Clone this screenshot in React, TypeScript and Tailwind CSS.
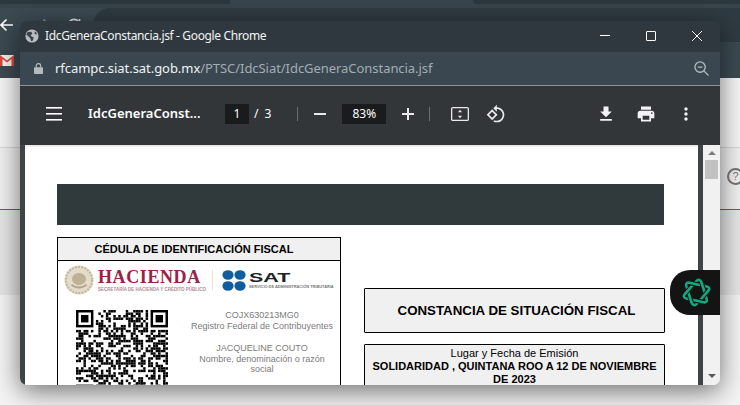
import React from "react";

const sans = "font-['Noto_Sans',sans-serif]";

function Qr() {
  const n = 37;
  const cells: React.ReactElement[] = [];
  const inFinder = (x: number, y: number) =>
    (x < 8 && y < 8) || (x > n - 9 && y < 8) || (x < 8 && y > n - 9);
  let s = 12345;
  for (let y = 0; y < n; y++) {
    for (let x = 0; x < n; x++) {
      s = (s * 1103515245 + 12345) & 0x7fffffff;
      if (inFinder(x, y)) continue;
      if (((s >> 16) & 7) < 4) cells.push(<rect key={`${x}-${y}`} x={x} y={y} width={1} height={1} />);
    }
  }
  const finder = (x: number, y: number) => (
    <g key={`f${x}-${y}`}>
      <rect x={x} y={y} width={7} height={7} />
      <rect x={x + 1} y={y + 1} width={5} height={5} fill="#fff" />
      <rect x={x + 2} y={y + 2} width={3} height={3} />
    </g>
  );
  return (
    <svg viewBox="0 0 37 37" className="w-[92px] h-[92px] shrink-0" fill="#000">
      {cells}
      {finder(0, 0)}
      {finder(30, 0)}
      {finder(0, 30)}
    </svg>
  );
}

function Seal() {
  return (
    <svg viewBox="0 0 32 32" className="w-[30px] h-[30px] shrink-0">
      <circle cx="16" cy="16" r="15.5" fill="#e3dccb" />
      <circle cx="16" cy="16" r="14" fill="none" stroke="#c4b89e" strokeWidth="2.4" strokeDasharray="2 1.4" />
      <ellipse cx="16" cy="15" rx="7.5" ry="6.5" fill="#bfb294" />
      <path d="M8 21c4 4 12 4 16 0" fill="none" stroke="#b3a587" strokeWidth="2" />
    </svg>
  );
}

function SatDots() {
  return (
    <svg viewBox="0 0 24 21" className="w-[24px] h-[21px] shrink-0" fill="#0f5c9e">
      <ellipse cx="6" cy="5" rx="5.6" ry="4.8" />
      <ellipse cx="18" cy="5" rx="5.6" ry="4.8" />
      <ellipse cx="6" cy="16" rx="5.6" ry="4.8" />
      <ellipse cx="18" cy="16" rx="5.6" ry="4.8" />
    </svg>
  );
}

type Pt = [number, number];
const rot = (p: Pt, deg: number): Pt => {
  const a = (deg * Math.PI) / 180;
  const x = p[0] - 16;
  const y = p[1] - 16;
  return [16 + x * Math.cos(a) - y * Math.sin(a), 16 + x * Math.sin(a) + y * Math.cos(a)];
};

function Knot() {
  const tri = "M16 3.5c1.2 0 2 .8 2.7 2l8.2 14.4c1.3 2.4.2 3.9-2.3 3.9H7.6c-2.6 0-3.7-1.6-2.4-3.9L13.4 5.4c.7-1.2 1.5-1.9 2.6-1.9z";
  const base: [Pt, Pt][] = [
    [[13.4, 5.4], [5.2, 19.9]],
    [[18.7, 5.5], [26.9, 19.9]],
    [[25, 23.8], [7.5, 23.8]],
  ];
  const a = base.map(([p, q]) => [rot(p, 12), rot(q, 12)] as [Pt, Pt]);
  const b = base.map(([p, q]) => [rot(p, 192), rot(q, 192)] as [Pt, Pt]);
  const hits: { x: number; y: number; over: [Pt, Pt]; second: [Pt, Pt]; ang: number }[] = [];
  for (const e of a) {
    for (const f of b) {
      const d1: Pt = [e[1][0] - e[0][0], e[1][1] - e[0][1]];
      const d2: Pt = [f[1][0] - f[0][0], f[1][1] - f[0][1]];
      const den = d1[0] * d2[1] - d1[1] * d2[0];
      if (Math.abs(den) < 1e-6) continue;
      const t = ((f[0][0] - e[0][0]) * d2[1] - (f[0][1] - e[0][1]) * d2[0]) / den;
      const u = ((f[0][0] - e[0][0]) * d1[1] - (f[0][1] - e[0][1]) * d1[0]) / den;
      if (t < 0 || t > 1 || u < 0 || u > 1) continue;
      const x = e[0][0] + t * d1[0];
      const y = e[0][1] + t * d1[1];
      hits.push({ x, y, over: e, second: f, ang: Math.atan2(y - 16, x - 16) });
    }
  }
  hits.sort((p, q) => p.ang - q.ang);
  return (
    <svg viewBox="0 0 32 32" className="w-[33px] h-[33px]" fill="none" stroke="#12a981" strokeWidth="2.5" strokeLinejoin="round">
      <path d={tri} transform="rotate(12 16 16)" />
      <path d={tri} transform="rotate(192 16 16)" />
      {hits.map((h, i) => {
        const line = i % 2 === 0 ? h.over : h.second;
        const dx = line[1][0] - line[0][0];
        const dy = line[1][1] - line[0][1];
        const len = Math.hypot(dx, dy);
        const ux = (dx / len) * 2.6;
        const uy = (dy / len) * 2.6;
        return (
          <g key={i}>
            <line x1={h.x - ux} y1={h.y - uy} x2={h.x + ux} y2={h.y + uy} stroke="#141414" strokeWidth="4.6" />
            <line x1={h.x - ux * 1.2} y1={h.y - uy * 1.2} x2={h.x + ux * 1.2} y2={h.y + uy * 1.2} />
          </g>
        );
      })}
    </svg>
  );
}

function Background() {
  return (
    <div className="w-[740px] h-[405px] flex flex-col bg-white">
      <div className="h-[4px] flex bg-[#37454c]">
        <div className="w-[230px] bg-[#2d383e]" />
        <div className="w-[243px]" />
        <div className="flex-1 bg-[#2d383e] rounded-bl-md" />
      </div>
      <div className="h-[4px] bg-[#37454c]" />
      <div className="h-[34px] flex bg-[#3c4a52]">
        <div className="w-[93px] pt-[10px] flex items-start">
          <svg viewBox="0 0 14 14" className="w-[14px] h-[14px]" fill="none" stroke="#fff" strokeWidth="1.6">
            <path d="M13 7H1M6.5 1.5 1 7l5.5 5.5" />
          </svg>
          <svg viewBox="0 0 14 14" className="ml-[22px] w-[14px] h-[14px]" fill="none" stroke="#8b969c" strokeWidth="1.6">
            <path d="M1 7h12M7.5 1.5 13 7l-5.5 5.5" />
          </svg>
          <svg viewBox="0 0 14 14" className="ml-[17px] w-[14px] h-[14px]" fill="none" stroke="#dfe3e5" strokeWidth="1.6">
            <path d="M12 4A6 6 0 1 0 13 7M12.5 1v3.5H9" />
          </svg>
        </div>
        <div className="flex-1 bg-[#2f3b42] rounded-l-[17px]" />
      </div>
      <div className="h-[36px] bg-[#3c4a52] pt-[13px]">
        <svg viewBox="0 0 14 11" className="w-[14px] h-[11px]">
          <rect width="14" height="11" fill="#f3f3f3" />
          <path d="M0 0l7 5.5L14 0v11h-2.5V4L7 7.5 2.5 4v7H0z" fill="#d9493b" />
        </svg>
      </div>
      <div className="h-[70px] bg-[#f6f6f6] border-b border-[#d8d8d8]" />
      <div className="h-[62px] bg-[#f1f1f1] border-b border-[#3f7a45] relative overflow-hidden">
        <div className="absolute right-[-4px] top-[20px] w-[17px] h-[17px] rounded-full border-2 border-[#777] flex items-center justify-center">
          <span className="font-['Liberation_Sans',sans-serif] text-[11px] text-[#777] leading-none">?</span>
        </div>
      </div>
      <div className="h-[85px] bg-[#e6e6e6]" />
      <div className="flex-1 bg-[#f4f4f4]" />
    </div>
  );
}

function Toolbar() {
  return (
    <div className={`h-[59px] shrink-0 bg-[#323639] flex items-center text-white ${sans} pb-[3px]`}>
      <svg viewBox="0 0 16 14" className="ml-[26px] w-[16px] h-[14px]" fill="#fff">
        <rect width="16" height="1.6" y="0" />
        <rect width="16" height="1.6" y="6" />
        <rect width="16" height="1.6" y="12" />
      </svg>
      <span className="ml-[26px] w-[112px] text-[13px] font-semibold whitespace-nowrap overflow-hidden">IdcGeneraConst...</span>
      <span className="ml-[25px] w-[24px] h-[20px] bg-[#191b1c] text-[12px] flex items-center justify-center">1</span>
      <span className="ml-[5px] text-[12px]">/</span>
      <span className="ml-[6px] text-[12px]">3</span>
      <div className="ml-[26px] w-px h-[14px] bg-[#6a6d70]" />
      <svg viewBox="0 0 12 2" className="ml-[16px] w-[12px] h-[2px]" fill="#e8eaed"><rect width="12" height="2" /></svg>
      <span className="ml-[16px] w-[44px] h-[20px] bg-[#191b1c] text-[12px] flex items-center justify-center">83%</span>
      <svg viewBox="0 0 12 12" className="ml-[16px] w-[12px] h-[12px]" fill="#e8eaed">
        <rect width="12" height="2" y="5" />
        <rect width="2" height="12" x="5" />
      </svg>
      <div className="ml-[15px] w-px h-[14px] bg-[#6a6d70]" />
      <svg viewBox="0 0 18 14" className="ml-[21px] w-[18px] h-[14px]" fill="none" stroke="#e8eaed" strokeWidth="1.3">
        <rect x=".65" y=".65" width="16.7" height="12.7" rx="1.2" />
        <path d="M9 2.8 11 5.2H7zM9 11.2 7 8.8h4z" fill="#e8eaed" stroke="none" />
      </svg>
      <svg viewBox="0 0 24 24" className="ml-[17px] w-[20px] h-[20px]" fill="#e8eaed">
        <path d="M7.34 6.41L.86 12.9l6.49 6.48 6.49-6.48-6.5-6.49zM3.69 12.9l3.66-3.66L11 12.9l-3.66 3.66-3.65-3.66zm15.67-6.26C17.61 4.88 15.3 4 13 4V.76L8.76 5 13 9.24V6c1.79 0 3.58.68 4.95 2.05 2.73 2.73 2.73 7.17 0 9.9C16.58 19.32 14.79 20 13 20c-.97 0-1.94-.21-2.84-.61l-1.49 1.49C10.02 21.62 11.51 22 13 22c2.3 0 4.61-.88 6.36-2.64 3.52-3.51 3.52-9.21 0-12.72z" />
      </svg>
      <div className="flex-1" />
      <svg viewBox="0 0 24 24" className="w-[20px] h-[20px]" fill="#f1f3f4">
        <path d="M19 9h-4V3H9v6H5l7 7 7-7zM5 18v2h14v-2H5z" />
      </svg>
      <svg viewBox="0 0 24 24" className="ml-[20px] w-[20px] h-[20px]" fill="#f1f3f4">
        <path d="M19 8H5c-1.66 0-3 1.34-3 3v6h4v4h12v-4h4v-6c0-1.66-1.34-3-3-3zm-3 11H8v-5h8v5zm3-7c-.55 0-1-.45-1-1s.45-1 1-1 1 .45 1 1-.45 1-1 1zm-1-9H6v4h12V3z" />
      </svg>
      <svg viewBox="0 0 24 24" className="ml-[20px] mr-[24px] w-[20px] h-[20px]" fill="#f1f3f4">
        <path d="M12 8c1.1 0 2-.9 2-2s-.9-2-2-2-2 .9-2 2 .9 2 2 2zm0 2c-1.1 0-2 .9-2 2s.9 2 2 2 2-.9 2-2-.9-2-2-2zm0 6c-1.1 0-2 .9-2 2s.9 2 2 2 2-.9 2-2-.9-2-2-2z" />
      </svg>
    </div>
  );
}

function Document() {
  return (
    <div className="flex-1 bg-white pt-[39px] pl-[32px] font-['Liberation_Sans',sans-serif] overflow-hidden shadow-[inset_0_3px_3px_-2px_rgba(0,0,0,0.15)]">
      <div className="w-[607px] h-[41px] bg-[#30393b]" />
      <div className="mt-[12px] flex items-start">
        <div className="w-[284px] h-[200px] border border-black shrink-0">
          <div className="h-[23px] bg-[#f0f0f0] border-b border-black flex items-center justify-center pr-[10px] text-[11px] font-bold text-black">
            CÉDULA DE IDENTIFICACIÓN FISCAL
          </div>
          <div className="mt-[4px] pl-[6px] flex items-center h-[30px]">
            <Seal />
            <div className="ml-[4px] w-[108px] flex flex-col">
              <span className="font-['Liberation_Serif',serif] font-bold text-[18px] leading-[19px] tracking-[0.6px] text-[#9b2247] whitespace-nowrap">HACIENDA</span>
              <span className="text-[4.5px] leading-[5px] font-bold text-[#b08a96] whitespace-nowrap">SECRETARÍA DE HACIENDA Y CRÉDITO PÚBLICO</span>
            </div>
            <div className="ml-[6px] w-px h-[20px] bg-[#e4e4e4]" />
            <div className="ml-[9px]"><SatDots /></div>
            <div className="ml-[3px] flex flex-col w-[88px]">
              <span className="font-bold text-[13px] leading-[13px] text-[#222] scale-x-[1.65] origin-left">SAT</span>
              <span className="text-[3.9px] leading-[6px] font-bold text-[#777] whitespace-nowrap">SERVICIO DE ADMINISTRACIÓN TRIBUTARIA</span>
            </div>
          </div>
          <div className="mt-[15px] pl-[18px] flex">
            <Qr />
            <div className="ml-[16px] w-[156px] text-center text-[9px] leading-[10.5px] text-[#7b7b7b]">
              <div>COJX630213MG0</div>
              <div>Registro Federal de Contribuyentes</div>
              <div className="mt-[12px]">JACQUELINE COUTO</div>
              <div>Nombre, denominación o razón</div>
              <div>social</div>
            </div>
          </div>
        </div>
        <div className="ml-[23px] w-[301px] shrink-0 pt-[51px] flex flex-col gap-[11px]">
          <div className="h-[45px] bg-[#f0f0f0] border border-black rounded-[1px] flex items-center justify-center pl-[4px] text-[13.3px] font-bold text-black">
            CONSTANCIA DE SITUACIÓN FISCAL
          </div>
          <div className="h-[70px] bg-[#f0f0f0] border border-black rounded-[1px] text-center text-[11px] leading-[13px] text-black pt-[2px]">
            <div>Lugar y Fecha de Emisión</div>
            <div className="font-bold">SOLIDARIDAD , QUINTANA ROO A 12 DE NOVIEMBRE DE 2023</div>
          </div>
        </div>
      </div>
    </div>
  );
}

function Scrollbar() {
  return (
    <div className="w-[17px] shrink-0 bg-[#f1f1f1] flex flex-col items-center">
      <div className="mt-[6px] w-0 h-0 border-x-[4px] border-x-transparent border-b-[4px] border-b-[#7d7d7d]" />
      <div className="mt-[5px] w-[13px] h-[19px] bg-[#c1c1c1]" />
      <div className="flex-1" />
      <div className="mb-[7px] w-0 h-0 border-x-[4px] border-x-transparent border-t-[4px] border-t-[#5a5a5a]" />
    </div>
  );
}

export default function App() {
  return (
    <div className="relative w-[740px] h-[405px] overflow-hidden">
      <Background />
      <div className="absolute left-[20px] top-[21px] w-[700px] h-[364px] rounded-[7px] overflow-hidden flex flex-col shadow-[0_6px_26px_rgba(0,0,0,0.55)] z-10">
        <div className={`h-[31px] shrink-0 bg-[#2f383e] flex items-center text-[#f1f3f4] pb-[2px] ${sans}`}>
          <svg viewBox="0 0 16 16" className="ml-[5px] w-[14px] h-[14px]">
            <circle cx="8" cy="8" r="7.5" fill="#b9bdc1" />
            <path d="M3 3.5 7 3l1.5 2-2 2 1.5 2 2 .5-1 3.5-2 1-1-3.5L3.5 8 1.5 6.5zM11 2.5l2.5 2-.5 2-2-1z" fill="#3a4349" />
          </svg>
          <span className="ml-[6px] text-[12px] tracking-[-0.36px] whitespace-nowrap">IdcGeneraConstancia.jsf - Google Chrome</span>
          <div className="flex-1" />
          <svg viewBox="0 0 10 1" className="w-[10px] h-[1px]" fill="#fff"><rect width="10" height="1" /></svg>
          <div className="ml-[36px] w-[10px] h-[10px] border border-white rounded-[1px]" />
          <svg viewBox="0 0 10 10" className="ml-[36px] mr-[18px] w-[10px] h-[10px]" stroke="#fff" strokeWidth="1"><path d="M0 0l10 10M10 0 0 10" /></svg>
        </div>
        <div className={`h-[34px] shrink-0 bg-[#3a4750] border-b border-[#8a9297] flex items-center ${sans}`}>
          <svg viewBox="0 0 10 12" className="ml-[14px] w-[9px] h-[11px]" fill="#b4bbbf">
            <rect y="4.5" width="10" height="7.5" rx="1" />
            <path d="M2.5 5V3a2.5 2.5 0 0 1 5 0v2" fill="none" stroke="#b4bbbf" strokeWidth="1.3" />
          </svg>
          <span className="ml-[12px] text-[13px] tracking-[-0.05px] whitespace-nowrap text-[#f1f3f4]">
            rfcampc.siat.sat.gob.mx<span className="text-[#a3adb3]">/PTSC/IdcSiat/IdcGeneraConstancia.jsf</span>
          </span>
          <div className="flex-1" />
          <svg viewBox="0 0 16 16" className="mr-[11px] w-[15px] h-[15px]" fill="none" stroke="#b4bbbf" strokeWidth="1.4">
            <circle cx="6.5" cy="6.5" r="5.5" />
            <path d="M4 6.5h5M10.5 10.5l5 5" />
          </svg>
        </div>
        <Toolbar />
        <div className="flex-1 flex min-h-0 overflow-hidden">
          <div className="w-[5px] bg-[#3f4346] shrink-0" />
          <Document />
          <div className="w-[5px] bg-[#3f4346] shrink-0" />
          <Scrollbar />
        </div>
      </div>
      <div className="absolute left-[670px] top-[270px] w-[50px] h-[45px] bg-[#141414] rounded-l-[20px] z-20 flex items-center pl-[10px]">
        <Knot />
      </div>
    </div>
  );
}
